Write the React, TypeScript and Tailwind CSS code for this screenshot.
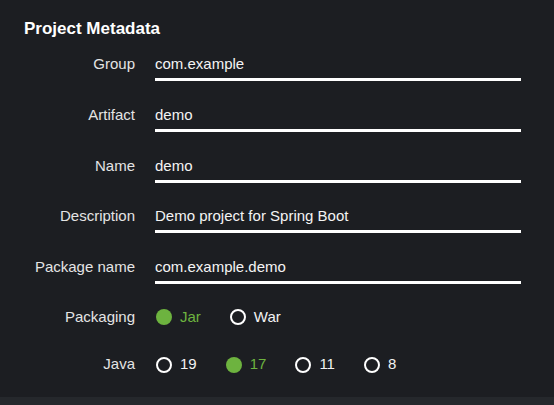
import React from "react";

const fields = [
  { label: "Group", value: "com.example" },
  { label: "Artifact", value: "demo" },
  { label: "Name", value: "demo" },
  { label: "Description", value: "Demo project for Spring Boot" },
  { label: "Package name", value: "com.example.demo" },
];

function Radio({ label, checked }: { label: string; checked?: boolean }) {
  return (
    <span className="flex items-center gap-2">
      {checked ? (
        <span className="block w-4 h-4 rounded-full bg-[#6db33f]" />
      ) : (
        <span className="block w-4 h-4 rounded-full border-2 border-white" />
      )}
      <span className={checked ? "text-[#6db33f]" : "text-[#f2f2f2]"}>{label}</span>
    </span>
  );
}

function Row({ label, children }: { label: string; children: React.ReactNode }) {
  return (
    <div className="flex items-center h-5">
      <div className="w-[111px] text-right text-[#e4e4e4]">{label}</div>
      <div className="ml-5 pl-px flex items-center gap-[29px]">{children}</div>
    </div>
  );
}

export default function App() {
  return (
    <div
      className="w-[554px] h-[405px] bg-[#1c1e22] flex flex-col overflow-hidden text-[15px]"
      style={{ fontFamily: '"Liberation Sans", Arial, sans-serif' }}
    >
      <div className="flex-1 pl-6 pt-[19px]">
        <h2 className="text-[17px] leading-5 font-bold text-white">Project Metadata</h2>

        {/* Text fields */}
        <div className="mt-[10px] flex flex-col gap-[18.75px]">
          {fields.map(f => (
            <div key={f.label} className="flex items-start">
              <div className="w-[111px] text-right leading-[29px] text-[#e4e4e4]">{f.label}</div>
              <div className="ml-5 w-[366px] h-8 border-b-[3px] border-white leading-[29px] text-[#f4f4f4]">
                {f.value}
              </div>
            </div>
          ))}
        </div>

        {/* Radio groups */}
        <div className="mt-[23px] flex flex-col gap-[27.5px]">
          <Row label="Packaging">
            <Radio label="Jar" checked />
            <Radio label="War" />
          </Row>
          <Row label="Java">
            <Radio label="19" />
            <Radio label="17" checked />
            <Radio label="11" />
            <Radio label="8" />
          </Row>
        </div>
      </div>
      <div className="h-2 bg-[#25282c]" />
    </div>
  );
}
